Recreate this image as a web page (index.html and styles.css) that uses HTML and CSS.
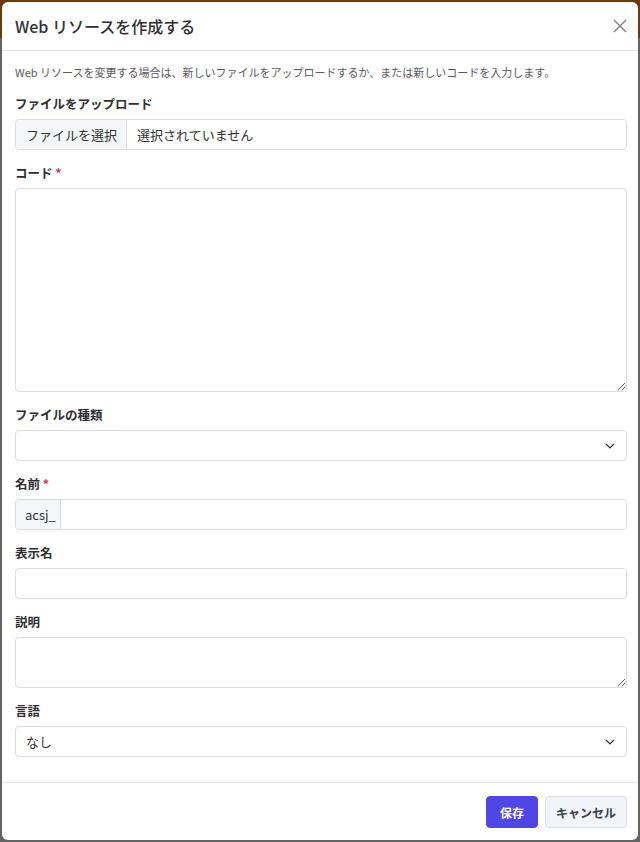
FILE: index.html
```html
<!DOCTYPE html>
<html lang="ja">

<head>
    <meta charset="utf-8">
    <title>Web リソースを作成する</title>
    <link rel="stylesheet" href="styles.css">
</head>

<body>
    <div class="modal">
        <div class="modal-header">
            <h2 class="modal-title">Web リソースを作成する</h2>
            <button class="modal-close" aria-label="閉じる">
                <svg width="16" height="16" viewBox="0 0 16 16">
                    <path d="M2 2L14 14M14 2L2 14" stroke="#8a8a8a" stroke-width="1.6" fill="none" />
                </svg>
            </button>
        </div>

        <div class="modal-body">
            <p class="help-text">Web リソースを変更する場合は、新しいファイルをアップロードするか、または新しいコードを入力します。</p>

            <div class="field">
                <label class="field-label">ファイルをアップロード</label>
                <div class="file-input">
                    <span class="file-btn">ファイルを選択</span>
                    <span class="file-name">選択されていません</span>
                </div>
            </div>

            <div class="field">
                <label class="field-label">コード <span class="required">*</span></label>
                <textarea class="control textarea-code"></textarea>
            </div>

            <div class="field">
                <label class="field-label">ファイルの種類</label>
                <div class="select-wrap">
                    <select class="control select">
                        <option></option>
                    </select>
                    <svg class="select-arrow" width="10" height="6" viewBox="0 0 10 6">
                        <path d="M1 1L5 5L9 1" stroke="#333" stroke-width="1.2" fill="none" />
                    </svg>
                </div>
            </div>

            <div class="field">
                <label class="field-label">名前 <span class="required">*</span></label>
                <div class="input-group">
                    <span class="input-prefix">acsj_</span>
                    <input class="input-group-control" type="text">
                </div>
            </div>

            <div class="field">
                <label class="field-label">表示名</label>
                <input class="control" type="text">
            </div>

            <div class="field">
                <label class="field-label">説明</label>
                <textarea class="control textarea-desc"></textarea>
            </div>

            <div class="field">
                <label class="field-label">言語</label>
                <div class="select-wrap">
                    <select class="control select">
                        <option>なし</option>
                    </select>
                    <svg class="select-arrow" width="10" height="6" viewBox="0 0 10 6">
                        <path d="M1 1L5 5L9 1" stroke="#333" stroke-width="1.2" fill="none" />
                    </svg>
                </div>
            </div>
        </div>

        <div class="modal-footer">
            <button class="btn btn-primary">保存</button>
            <button class="btn btn-secondary">キャンセル</button>
        </div>
    </div>
</body>

</html>
```

FILE: styles.css
```css
* {
    box-sizing: border-box;
}

body {
    margin: 0;
    height: 842px;
    overflow: hidden;
    background: linear-gradient(to bottom, #6a3a0c 0, #6a3a0c 38px, #646464 38px);
    font-family: "Noto Sans CJK JP", "Noto Sans", sans-serif;
    color: #2f2f33;
}

.modal {
    margin: 2px 2px 2px 2px;
    width: 636px;
    height: 838px;
    background: #fff;
    border-radius: 6px;
    display: flex;
    flex-direction: column;
    overflow: hidden;
}

.modal-header {
    height: 49px;
    flex: none;
    display: flex;
    align-items: center;
    justify-content: space-between;
    padding: 0 10px 0 13px;
    border-bottom: 1px solid #e2e2ea;
}

.modal-title {
    margin: 0;
    font-size: 16px;
    font-weight: 500;
    line-height: 20px;
    color: #2f2f33;
}

.modal-close {
    border: 0;
    background: none;
    padding: 0;
    width: 16px;
    height: 16px;
    display: flex;
}

.modal-body {
    flex: 1;
    padding: 13px 11px 0 13px;
}

.help-text {
    margin: 0 0 15px;
    height: 16px;
    font-size: 11px;
    line-height: 16px;
    color: #5a5a60;
}

.field {
    display: flex;
    flex-direction: column;
    margin-bottom: 14px;
}

.field:last-child {
    margin-bottom: 0;
}

.field-label {
    display: block;
    height: 18px;
    font-size: 12.5px;
    font-weight: 700;
    line-height: 18px;
    margin-bottom: 6px;
    color: #2f2f33;
}

.required {
    color: #e0354a;
}

.control {
    display: block;
    width: 100%;
    height: 31px;
    margin: 0;
    border: 1px solid #dcdde4;
    border-radius: 4px;
    background: #fff;
    font-family: inherit;
    font-size: 13px;
    color: #333;
    padding: 0 10px;
    outline: none;
}

.textarea-code {
    height: 204px;
    resize: vertical;
    padding: 6px 10px;
}

.textarea-desc {
    height: 51px;
    resize: vertical;
    padding: 6px 10px;
}

.select-wrap {
    position: relative;
    height: 31px;
}

.select {
    appearance: none;
    -webkit-appearance: none;
}

.select-arrow {
    position: absolute;
    right: 12px;
    top: 13px;
    pointer-events: none;
}

.file-input,
.input-group {
    display: flex;
    height: 31px;
    border: 1px solid #dcdde4;
    border-radius: 4px;
    overflow: hidden;
    font-size: 13px;
    line-height: 29px;
}

.file-btn {
    background: #f5f6f8;
    border-right: 1px solid #dcdde4;
    padding: 0 9px 0 10px;
    color: #333;
}

.file-name {
    padding: 0 10px;
    color: #333;
}

.input-prefix {
    background: #f5f6f8;
    border-right: 1px solid #dcdde4;
    padding: 0 4px 0 9px;
    color: #333;
}

.input-group-control {
    flex: 1;
    min-width: 0;
    height: 29px;
    border: 0;
    outline: none;
    padding: 0 10px;
    font-family: inherit;
    font-size: 13px;
}

.modal-footer {
    flex: none;
    display: flex;
    justify-content: flex-end;
    gap: 7px;
    padding: 13px 11px 12px;
    border-top: 1px solid #e2e2ea;
}

.btn {
    height: 32px;
    border-radius: 4px;
    font-family: inherit;
    font-size: 12px;
    font-weight: 700;
    padding: 0 13px;
}

.btn-primary {
    background: #4f46e5;
    border: 1px solid #4f46e5;
    color: #fff;
}

.btn-secondary {
    background: #f1f4f8;
    border: 1px solid #dde1e8;
    color: #3a3f4a;
    padding: 0 10px;
}
```
